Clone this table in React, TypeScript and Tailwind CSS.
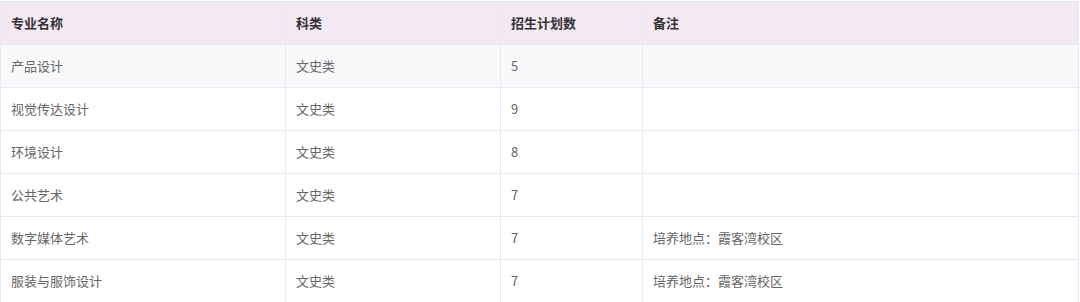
import React from "react";

const ROWS = [
  { name: "产品设计", kind: "文史类", plan: "5", note: "" },
  { name: "视觉传达设计", kind: "文史类", plan: "9", note: "" },
  { name: "环境设计", kind: "文史类", plan: "8", note: "" },
  { name: "公共艺术", kind: "文史类", plan: "7", note: "" },
  { name: "数字媒体艺术", kind: "文史类", plan: "7", note: "培养地点：霞客湾校区" },
  { name: "服装与服饰设计", kind: "文史类", plan: "7", note: "培养地点：霞客湾校区" },
];

const FONT = "font-['Noto_Sans_CJK_SC','Noto_Sans',sans-serif]";

export default function App() {
  return (
    <div className={`w-[1080px] h-[302px] bg-white pt-px ${FONT}`}>
      <table className="w-[1079px] table-fixed border-collapse text-[13px]">
        <colgroup>
          <col className="w-[285px]" />
          <col className="w-[215px]" />
          <col className="w-[142px]" />
          <col />
        </colgroup>
        <thead>
          <tr className="h-[43px] bg-[#f4e9f3]">
            {["专业名称", "科类", "招生计划数", "备注"].map((h) => (
              <th
                key={h}
                className="border border-[#e6e9ef] px-[10px] text-left font-semibold text-[#333]"
              >
                {h}
              </th>
            ))}
          </tr>
        </thead>
        <tbody>
          {ROWS.map((r, i) => (
            <tr key={r.name} className={`h-[43px] ${i === 0 ? "bg-[#f8f9fb]" : "bg-white"}`}>
              <td className="border border-[#e6e9ef] px-[10px] text-[#666]">{r.name}</td>
              <td className="border border-[#e6e9ef] px-[10px] text-[#666]">{r.kind}</td>
              <td className="border border-[#e6e9ef] px-[10px] text-[#666]">{r.plan}</td>
              <td className="border border-[#e6e9ef] px-[10px] text-[#666]">{r.note}</td>
            </tr>
          ))}
        </tbody>
      </table>
    </div>
  );
}
